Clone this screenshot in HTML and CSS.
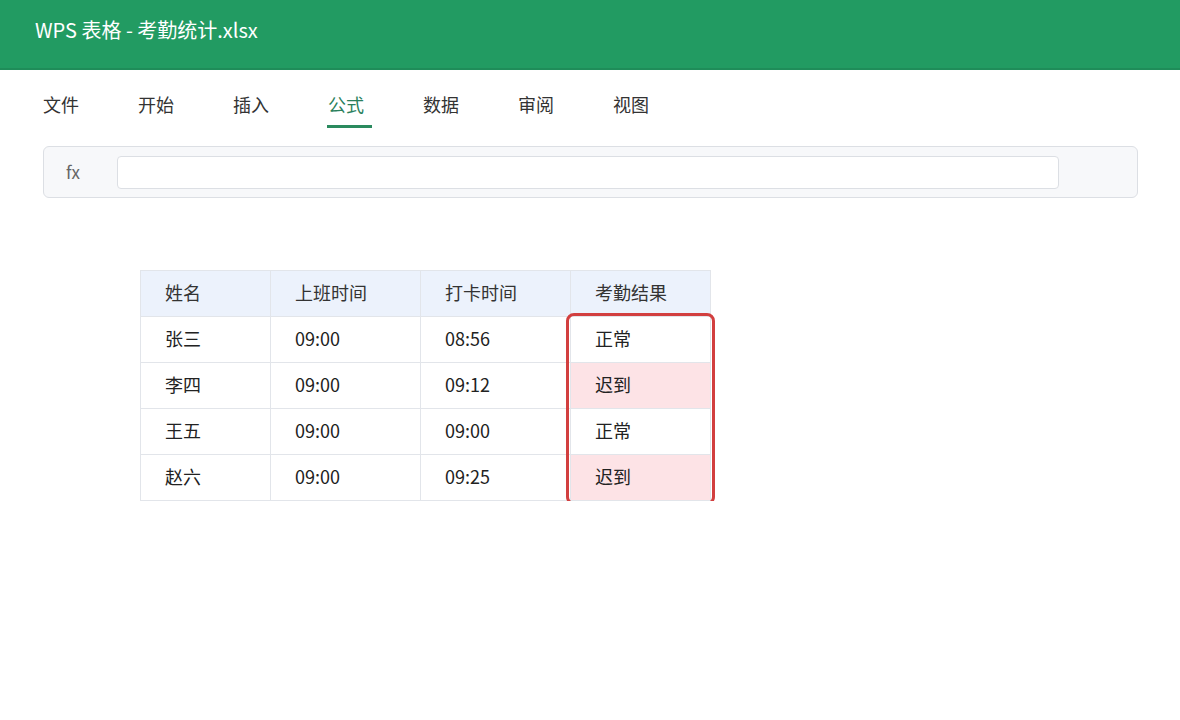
FILE: index.html
```html
<!DOCTYPE html>
<html lang="zh-CN">
<head>
<meta charset="utf-8">
<title>WPS 表格 - 考勤统计.xlsx</title>
<link rel="stylesheet" href="styles.css">
</head>
<body>
<header class="titlebar">WPS 表格 - 考勤统计.xlsx</header>
<nav class="tabs">
  <span class="tab">文件</span>
  <span class="tab">开始</span>
  <span class="tab">插入</span>
  <span class="tab active">公式</span>
  <span class="tab">数据</span>
  <span class="tab">审阅</span>
  <span class="tab">视图</span>
</nav>
<div class="formula-bar">
  <span class="fx">fx</span>
  <div class="formula-input"></div>
</div>
<div class="sheet">
  <div class="table-wrap">
    <table class="grid">
      <colgroup>
        <col class="c1"><col class="c2"><col class="c3"><col class="c4">
      </colgroup>
      <thead>
        <tr><th>姓名</th><th>上班时间</th><th>打卡时间</th><th>考勤结果</th></tr>
      </thead>
      <tbody>
        <tr><td>张三</td><td>09:00</td><td>08:56</td><td>正常</td></tr>
        <tr><td>李四</td><td>09:00</td><td>09:12</td><td class="late">迟到</td></tr>
        <tr><td>王五</td><td>09:00</td><td>09:00</td><td>正常</td></tr>
        <tr><td>赵六</td><td>09:00</td><td>09:25</td><td class="late">迟到</td></tr>
      </tbody>
    </table>
    <div class="highlight"></div>
  </div>
</div>
</body>
</html>
```
FILE: styles.css
```css
* { box-sizing: border-box; }
body {
  margin: 0;
  background: #ffffff;
  font-family: "Noto Sans CJK SC", "Noto Sans", sans-serif;
  color: #222;
}
.titlebar {
  height: 70px;
  background: #229b62;
  border-bottom: 2px solid #1f8c59;
  color: #fff;
  font-size: 20px;
  line-height: 26px;
  padding: 17px 0 0 35px;
}
.tabs {
  display: flex;
  align-items: flex-start;
  gap: 59px;
  height: 58px;
  padding: 21px 0 0 43px;
}
.tab {
  font-size: 18px;
  line-height: 26px;
  color: #333;
}
.tab.active {
  color: #2a7f5c;
}
.tab.active::after {
  content: "";
  display: block;
  width: 45px;
  height: 3px;
  margin: 8px -9px 0 -1px;
  background: #2a8a5e;
}
.formula-bar {
  margin: 18px 42px 0 43px;
  height: 52px;
  background: #f7f8fa;
  border: 1px solid #dcdfe4;
  border-radius: 6px;
  display: flex;
  align-items: center;
  padding: 0 78px 0 22px;
}
.fx {
  width: 51px;
  font-size: 17px;
  color: #666;
  line-height: 20px;
}
.formula-input {
  flex: 1;
  height: 33px;
  background: #fff;
  border: 1px solid #dcdfe4;
  border-radius: 4px;
}
.sheet {
  padding: 72px 0 0 140px;
}
.table-wrap {
  position: relative;
  width: 570px;
}
.grid {
  border-collapse: collapse;
  table-layout: fixed;
  width: 570px;
  font-size: 18px;
}
.c1 { width: 130px; }
.c2 { width: 150px; }
.c3 { width: 150px; }
.c4 { width: 140px; }
.grid th, .grid td {
  height: 46px;
  border: 1px solid #e2e5ea;
  padding: 0 0 4px 24px;
  text-align: left;
  font-weight: normal;
  color: #222;
}
.grid th {
  background: #ecf2fc;
  color: #333;
}
.grid td.late {
  background: #fde3e6;
}
.highlight {
  position: absolute;
  left: 426px;
  top: 43px;
  width: 149px;
  height: 192px;
  border: 3px solid #d23f3f;
  border-radius: 8px;
  pointer-events: none;
}
```
